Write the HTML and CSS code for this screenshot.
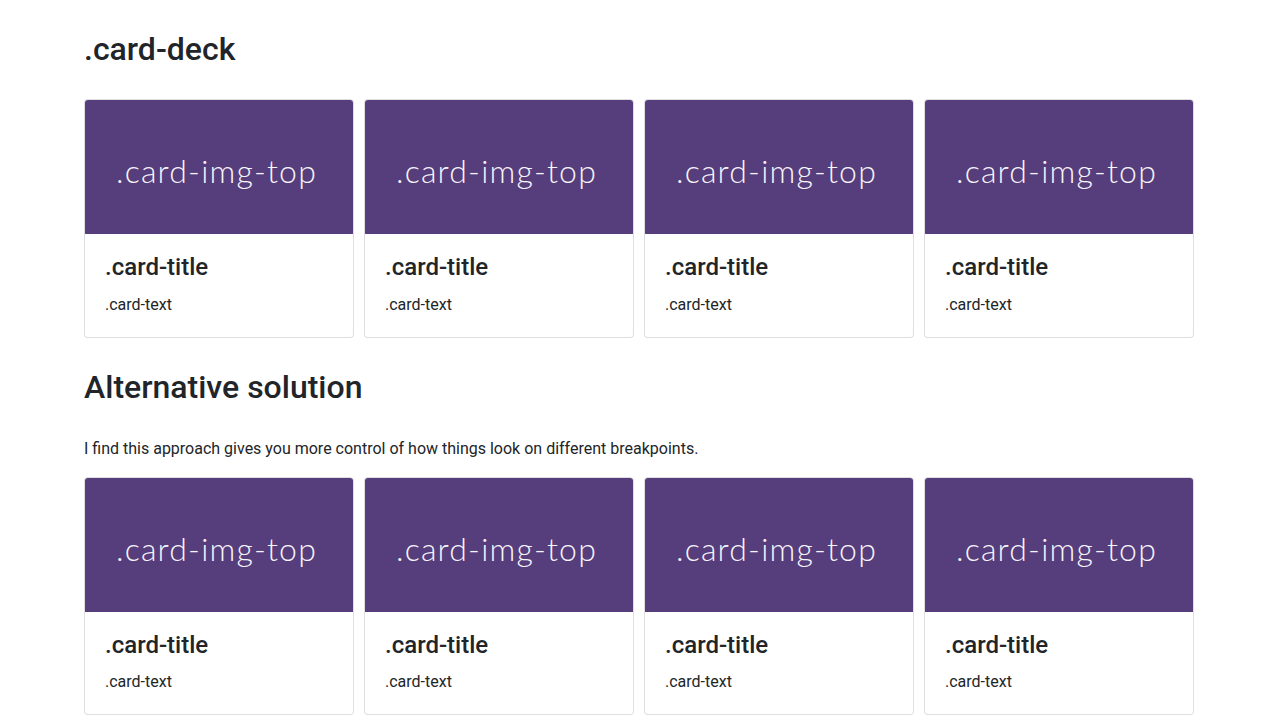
FILE: index.html
```html
<!DOCTYPE html>
<html lang="en">
<head>
    <meta charset="UTF-8">
    <title>Card deck</title>
    <link rel="stylesheet" href="styles.css">
</head>
<body>

<div class="container">
    <h2>.card-deck</h2>

    <div class="card-deck">
        <div class="card">
            <div class="card-img-top">.card-img-top</div>
            <div class="card-body">
                <h4 class="card-title">.card-title</h4>
                <p class="card-text">.card-text</p>
            </div>
        </div>
        <div class="card">
            <div class="card-img-top">.card-img-top</div>
            <div class="card-body">
                <h4 class="card-title">.card-title</h4>
                <p class="card-text">.card-text</p>
            </div>
        </div>
        <div class="card">
            <div class="card-img-top">.card-img-top</div>
            <div class="card-body">
                <h4 class="card-title">.card-title</h4>
                <p class="card-text">.card-text</p>
            </div>
        </div>
        <div class="card">
            <div class="card-img-top">.card-img-top</div>
            <div class="card-body">
                <h4 class="card-title">.card-title</h4>
                <p class="card-text">.card-text</p>
            </div>
        </div>
    </div>

    <h2>Alternative solution</h2>
    <p class="lead-text">I find this approach gives you more control of how things look on different breakpoints.</p>

    <div class="card-row">
        <div class="card">
            <div class="card-img-top">.card-img-top</div>
            <div class="card-body">
                <h4 class="card-title">.card-title</h4>
                <p class="card-text">.card-text</p>
            </div>
        </div>
        <div class="card">
            <div class="card-img-top">.card-img-top</div>
            <div class="card-body">
                <h4 class="card-title">.card-title</h4>
                <p class="card-text">.card-text</p>
            </div>
        </div>
        <div class="card">
            <div class="card-img-top">.card-img-top</div>
            <div class="card-body">
                <h4 class="card-title">.card-title</h4>
                <p class="card-text">.card-text</p>
            </div>
        </div>
        <div class="card">
            <div class="card-img-top">.card-img-top</div>
            <div class="card-body">
                <h4 class="card-title">.card-title</h4>
                <p class="card-text">.card-text</p>
            </div>
        </div>
    </div>
</div>

</body>
</html>
```

FILE: styles.css
```css
body {
    margin: 0;
    font-family: Roboto, "Liberation Sans", sans-serif;
    font-size: 16px;
    line-height: 1.5;
    color: #212529;
    background-color: #fff;
}
.container {
    max-width: 1110px;
    margin: 0 auto;
    padding: 0 15px 0 14px;
}
h2 {
    font-size: 32px;
    font-weight: 500;
    line-height: 1.2;
    margin: 30px 0 30.5px;
}
.lead-text {
    margin: 0 0 16px;
}
.card-deck,
.card-row {
    display: grid;
    grid-template-columns: repeat(4, 1fr);
    gap: 10px;
}
.card {
    display: flex;
    flex-direction: column;
    background-color: #fff;
    border: 1px solid rgba(0, 0, 0, .125);
    border-radius: 4px;
}
.card-img-top {
    height: 126px;
    padding: 8px 5px 0 0;
    display: flex;
    align-items: center;
    justify-content: center;
    background-color: #563d7c;
    color: #f7f5fa;
    font-family: Lato, "Open Sans", sans-serif;
    font-weight: 300;
    font-size: 32px;
    line-height: 1;
    letter-spacing: 1.2px;
    border-radius: 3px 3px 0 0;
}
.card-body {
    padding: 19px 20px 20px;
}
.card-title {
    font-size: 24px;
    font-weight: 500;
    line-height: 1.2;
    margin: 0 0 11px;
}
.card-text {
    margin: 0;
}
```
